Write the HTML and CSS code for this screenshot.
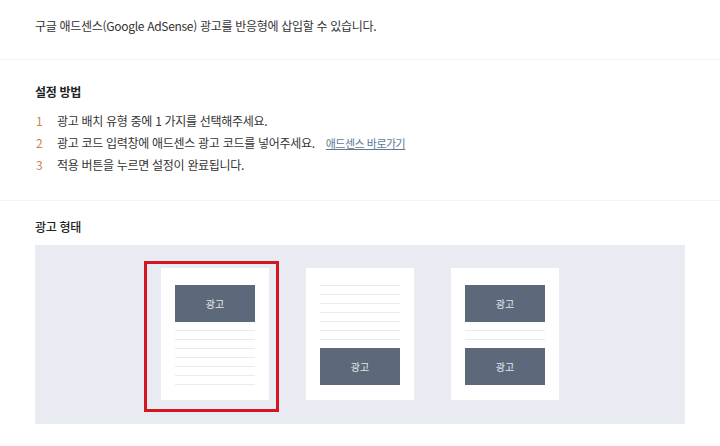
FILE: index.html
```html
<!DOCTYPE html>
<html lang="ko">
<head>
  <meta charset="UTF-8">
  <meta name="viewport" content="width=device-width, initial-scale=1.0">
  <title>애드센스 설정</title>
  <link rel="stylesheet" href="styles.css">
</head>
<body>
  <section class="section intro">
    <p>구글 애드센스(Google AdSense) 광고를 반응형에 삽입할 수 있습니다.</p>
  </section>

  <section class="section guide">
    <h2>설정 방법</h2>
    <ol class="steps">
      <li><span class="num">1</span>광고 배치 유형 중에 1 가지를 선택해주세요.</li>
      <li><span class="num">2</span>광고 코드 입력창에 애드센스 광고 코드를 넣어주세요.<a href="#" class="link">애드센스 바로가기</a></li>
      <li><span class="num">3</span>적용 버튼을 누르면 설정이 완료됩니다.</li>
    </ol>
  </section>

  <section class="section types">
    <h2 class="light">광고 형태</h2>
    <div class="panel">
      <div class="card selected">
        <div class="ad">광고</div>
        <div class="lines gap">
          <div class="line"></div>
          <div class="line"></div>
          <div class="line"></div>
          <div class="line"></div>
          <div class="line"></div>
          <div class="line"></div>
          <div class="line"></div>
        </div>
      </div>
      <div class="card">
        <div class="lines">
          <div class="line"></div>
          <div class="line"></div>
          <div class="line"></div>
          <div class="line"></div>
          <div class="line"></div>
          <div class="line"></div>
          <div class="line"></div>
        </div>
        <div class="ad">광고</div>
      </div>
      <div class="card">
        <div class="ad">광고</div>
        <div class="lines gap">
          <div class="line"></div>
          <div class="line"></div>
        </div>
        <div class="ad">광고</div>
      </div>
    </div>
  </section>
</body>
</html>
```

FILE: styles.css
```css
body {
  font-family: "Noto Sans CJK KR", "Noto Sans", sans-serif;
  background-color: #fff;
  color: #333;
  margin: 0;
  font-size: 12px;
  letter-spacing: -0.3px;
}
.section {
  padding: 0 35px;
  border-bottom: 1px solid #f4f4f4;
}
.section p {
  margin: 0;
  line-height: 20px;
}
.intro {
  padding-top: 16px;
  padding-bottom: 23px;
}
h2 {
  font-size: 12px;
  font-weight: 700;
  line-height: 20px;
  margin: 0;
  color: #222;
}
h2.light {
  font-weight: 500;
}
.guide {
  padding-top: 22px;
  padding-bottom: 24px;
}
.steps {
  list-style: none;
  margin: 8px 0 0;
  padding: 0;
}
.steps li {
  line-height: 22px;
  display: flex;
  align-items: center;
}
.num {
  width: 21px;
  padding-left: 1px;
  color: #c98456;
}
.link {
  margin-left: 11px;
  font-size: 11px;
  letter-spacing: -0.5px;
  color: #5d7894;
  text-decoration: underline;
}
.types {
  border-bottom: none;
  padding-top: 16px;
}
.panel {
  margin-top: 8px;
  background-color: #e8ecf2;
  height: 179px;
  padding-top: 23px;
  box-sizing: border-box;
  display: flex;
  justify-content: center;
  gap: 37px;
}
.card {
  position: relative;
  width: 108px;
  height: 132px;
  background-color: #fff;
  box-sizing: border-box;
  padding: 17px 14px 0;
  display: flex;
  flex-direction: column;
}
.card.selected::after {
  content: "";
  position: absolute;
  left: -17px;
  top: -7px;
  width: 135px;
  height: 151px;
  box-sizing: border-box;
  border: 3px solid #d3161f;
}
.ad {
  height: 37px;
  background-color: #5d687a;
  color: #e6e9ee;
  font-size: 10px;
  letter-spacing: 0;
  display: flex;
  align-items: center;
  justify-content: center;
}
.lines.gap {
  margin-top: 8px;
}
.line {
  height: 9px;
  box-sizing: border-box;
  border-top: 1px solid #e9ebef;
}
```
